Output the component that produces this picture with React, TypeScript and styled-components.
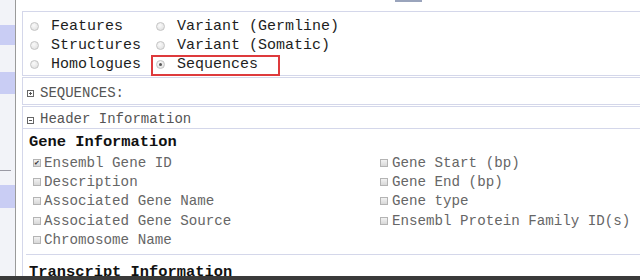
import React from 'react'
import styled, { createGlobalStyle } from 'styled-components'

const Global = createGlobalStyle`
  html, body {
    margin: 0;
    padding: 0;
    background: #fff;
    overflow: hidden;
  }
  body {
    font-family: 'Liberation Mono', 'DejaVu Sans Mono', monospace;
  }
`

const Frame = styled.div`
  display: flex;
  height: 276px;
  border-bottom: 4px solid #3a3a3a;
  overflow: hidden;
`

const Strip = styled.div`
  width: 15px;
  flex: none;
  display: flex;
  flex-direction: column;
  border-right: 1px solid #9a9a9a;
  background: #f2f3f8;
`

const Band = styled.div<{ $h: number; $blue?: boolean }>`
  height: ${p => p.$h}px;
  flex: none;
  background: ${p => (p.$blue ? '#c9cdf4' : '#f2f3f8')};
`

const Dash = styled.div`
  height: 1px;
  width: 11px;
  background: #9a9aa4;
`

const Main = styled.div`
  flex: 1;
  display: flex;
  flex-direction: column;
  padding-left: 6px;
  min-width: 0;
`

const TopGap = styled.div`
  height: 11px;
  flex: none;
  position: relative;
`

const Nub = styled.div`
  position: absolute;
  left: 373px;
  top: 0;
  width: 27px;
  height: 2px;
  background: #9aa4bc;
`

const Box = styled.div<{ $grow?: boolean }>`
  border: 1px solid #d4d7ea;
  border-right: none;
  margin-bottom: 1px;
  flex: ${p => (p.$grow ? '1' : 'none')};
  display: flex;
  flex-direction: column;
`

const RadioGrid = styled.div`
  display: grid;
  grid-template-columns: 126px auto;
  grid-auto-rows: 19px;
  padding: 5px 0 1px 3px;
  width: max-content;
`

const RadioItem = styled.div<{ $picked?: boolean }>`
  position: relative;
  display: flex;
  align-items: center;
  gap: 12px;
  padding-left: 4px;
  padding-right: 6px;
  font-size: 15px;
  color: #1e1e1e;
  white-space: pre;

  &::after {
    content: '';
    display: ${p => (p.$picked ? 'block' : 'none')};
    position: absolute;
    left: -1px;
    top: 0;
    width: 129px;
    height: 21px;
    box-sizing: border-box;
    border: 2px solid #de3a3c;
  }
`

const Radio = styled.span<{ $on?: boolean }>`
  width: 9px;
  height: 9px;
  border-radius: 50%;
  flex: none;
  box-sizing: border-box;
  border: 1px solid #c4c4c4;
  background: radial-gradient(circle at 40% 35%, #fafafa 0%, #dcdcdc 100%);
  position: relative;

  &::after {
    content: '';
    display: ${p => (p.$on ? 'block' : 'none')};
    position: absolute;
    left: 2px;
    top: 2px;
    width: 3px;
    height: 3px;
    border-radius: 50%;
    background: #555;
  }
`

const ToggleRow = styled.div<{ $line?: boolean }>`
  display: flex;
  align-items: center;
  gap: 6px;
  padding: 3px 0 0 4px;
  height: ${p => (p.$line ? 18 : 23)}px;
  font-size: 14px;
  color: #555;
  border-bottom: ${p => (p.$line ? '1px solid #d4d7ea' : 'none')};
  flex: none;
`

const Toggle = styled.span`
  width: 7px;
  height: 7px;
  flex: none;
  box-sizing: border-box;
  border: 1px solid #666;
  position: relative;
  margin-top: 2px;

  &::before {
    content: '';
    position: absolute;
    left: 1px;
    right: 1px;
    top: 2px;
    height: 1px;
    background: #555;
  }
`

const Plus = styled(Toggle)`
  &::after {
    content: '';
    position: absolute;
    top: 1px;
    bottom: 1px;
    left: 2px;
    width: 1px;
    background: #555;
  }
`

const Body = styled.div`
  padding-left: 3px;
  display: flex;
  flex-direction: column;
`

const GroupTitle = styled.div<{ $rule?: boolean }>`
  font-size: 15.4px;
  font-weight: bold;
  color: #111;
  line-height: 20px;
  padding-left: 3px;
  margin-top: ${p => (p.$rule ? 0 : 3)}px;
  padding-top: ${p => (p.$rule ? 7 : 0)}px;
  border-top: ${p => (p.$rule ? '1px solid #d4d7ea' : 'none')};
`

const CheckGrid = styled.div`
  display: grid;
  grid-template-columns: 347px auto;
  grid-auto-flow: column;
  grid-template-rows: repeat(5, 19.3px);
  padding-left: 7px;
  margin-top: 1px;
  margin-bottom: 5px;
`

const CheckItem = styled.div<{ $gap: number }>`
  display: flex;
  align-items: center;
  gap: ${p => p.$gap}px;
  font-size: 14.2px;
  color: #666;
  white-space: pre;
`

const Box8 = styled.span<{ $on?: boolean }>`
  width: 8px;
  height: 8px;
  flex: none;
  box-sizing: border-box;
  border: 1px solid #b4b4b4;
  background: linear-gradient(#f2f2f2, #d8d8d8);
  font-size: 8px;
  line-height: 6px;
  color: #333;
  text-align: center;
  overflow: hidden;
`

const radios: [string, boolean][] = [
  ['Features', false],
  ['Variant (Germline)', false],
  ['Structures', false],
  ['Variant (Somatic)', false],
  ['Homologues', false],
  ['Sequences', true],
]

const leftChecks: [string, boolean][] = [
  ['Ensembl Gene ID', true],
  ['Description', false],
  ['Associated Gene Name', false],
  ['Associated Gene Source', false],
  ['Chromosome Name', false],
]

const rightChecks = ['Gene Start (bp)', 'Gene End (bp)', 'Gene type', 'Ensembl Protein Family ID(s)']

export default function App() {
  return (
    <>
      <Global />
      <Frame>
        <Strip>
          <Band $h={25} />
          <Band $h={20} $blue />
          <Band $h={27} />
          <Band $h={22} $blue />
          <Band $h={76} />
          <Dash />
          <Band $h={14} />
          <Band $h={23} $blue />
          <Band $h={60} />
        </Strip>
        <Main>
          <TopGap><Nub /></TopGap>
          <Box>
            <RadioGrid>
              {radios.map(([label, on]) => (
                <RadioItem key={label} $picked={on}>
                  <Radio $on={on} />
                  {label}
                </RadioItem>
              ))}
            </RadioGrid>
          </Box>
          <Box>
            <ToggleRow><Plus />SEQUENCES:</ToggleRow>
          </Box>
          <Box $grow>
            <ToggleRow $line><Toggle />Header Information</ToggleRow>
            <Body>
              <GroupTitle>Gene Information</GroupTitle>
              <CheckGrid>
                {leftChecks.map(([label, on]) => (
                  <CheckItem key={label} $gap={3}>
                    <Box8 $on={on}>{on ? '✔' : ''}</Box8>
                    {label}
                  </CheckItem>
                ))}
                {rightChecks.map(label => (
                  <CheckItem key={label} $gap={4}>
                    <Box8 />
                    {label}
                  </CheckItem>
                ))}
              </CheckGrid>
              <GroupTitle $rule>Transcript Information</GroupTitle>
            </Body>
          </Box>
        </Main>
      </Frame>
    </>
  )
}
